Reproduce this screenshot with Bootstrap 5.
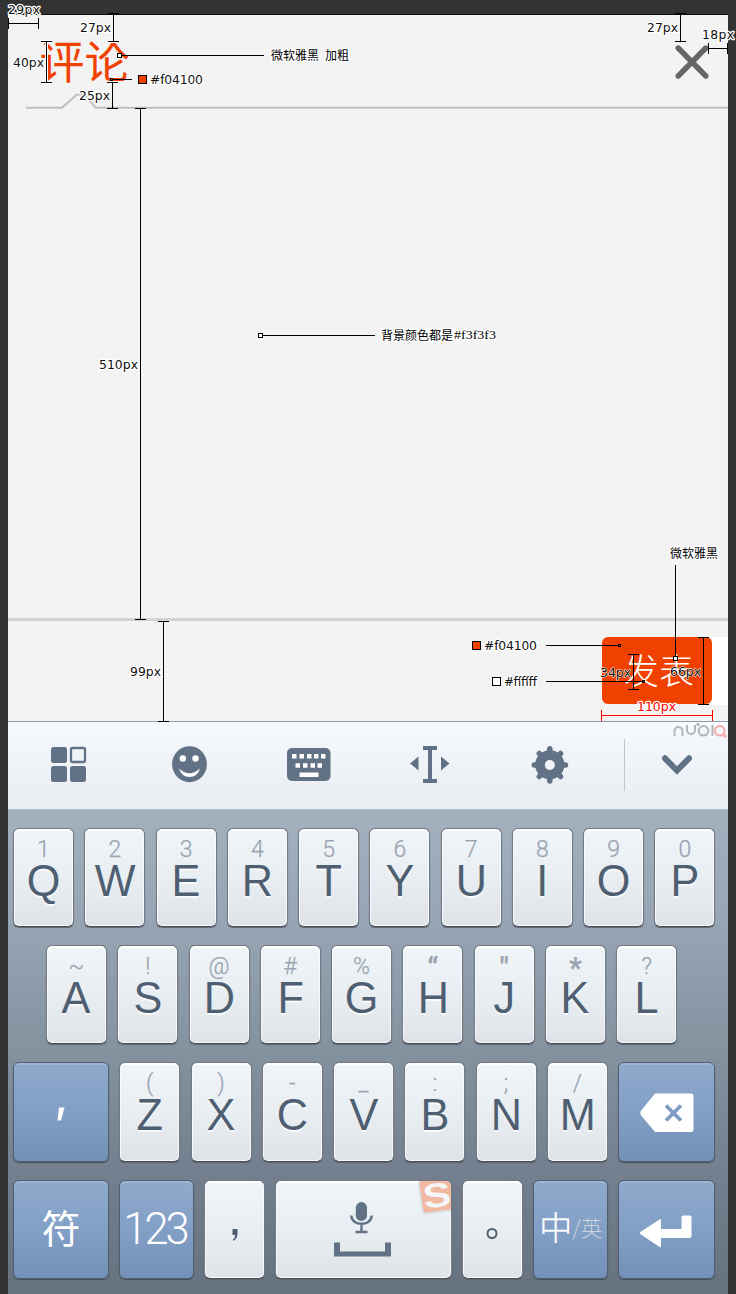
<!DOCTYPE html>
<html lang="zh-CN">
<head>
<meta charset="utf-8">
<meta name="viewport" content="width=device-width, initial-scale=1">
<title>评论</title>
<link href="https://cdn.jsdelivr.net/npm/bootstrap@5.3.0/dist/css/bootstrap.min.css" rel="stylesheet">
<style>
body{background:#333;font-family:"Liberation Sans","Noto Sans CJK SC",sans-serif;height:1294px;overflow:hidden}
.phone{width:720px;height:1280px;margin:14px 8px 0;background:#f3f3f3;border-top:1px solid #0c0c0c}
.top-area{height:91px;padding:0 19.5px 0 30px}
.title-text{color:#f04100;font:45px/66px "Noto Sans CJK SC",sans-serif;margin:12px 0 0 1.5px}
.close-btn{width:34px;height:36px;margin-top:29px;padding:0;border:0;background:none;line-height:0}
.tab-line{height:16px;margin-top:-13px;line-height:0}
.editor{height:509px}
.action-bar{height:103px;border-top:3px solid #d3d3d3;padding-top:16px}
.send-btn{width:110px;height:67px;border:0;border-radius:6px;background:#f04100;color:#fff;font:300 35px/60px "Noto Sans CJK SC",sans-serif;padding:0 0 3px 4px}
.send-pad{width:16px;height:68px;background:#fff}
.tool-bar{height:89px;border-top:1px solid #8e9fac;border-bottom:1px solid #b7c4d0;background:linear-gradient(#f6f9fd,#eef1f6 60%,#e9eef2)}
.tool-cell{width:120.5px}
.tool-last{width:104px;height:52px;border-left:1px solid #bcc7d2;margin-top:17px}
.keyboard{height:485px;background:linear-gradient(#a3b0be,#98a5b4 22%,#84919f 50%,#727e8d 77%,#67727f);padding:18px 12px 0 5px;gap:18px}
.key-row{gap:10.27px}
.key{position:relative;width:61px;height:99.2px;border:1px solid #737a83;border-bottom-color:#4a5058;border-radius:6px;background:linear-gradient(#f0f5fa,#e8edf1 55%,#dfe3e8);box-shadow:inset 0 2px 0 #fff,inset 1px 0 0 #f8fafc,inset -1px 0 0 #f8fafc,inset 0 -1px 0 #f8fafc,0 1px 1px #5a646f;color:#4f5f72;overflow:hidden;flex-shrink:0}
.key-blue{background:linear-gradient(#8eaacb,#829fc6 50%,#7390b6);border-color:#525f70;box-shadow:inset 0 2px 0 #9bb7d5,0 1px 1px #444e5b;color:#fff}
.hint{font:300 23px/27px Roboto,sans-serif;height:27px;margin-top:6.5px;color:#9aa3b0;-webkit-text-stroke:.25px #9aa3b0}
.hint-bold{font-weight:500;font-size:29px;line-height:31px}
.cap{font:45px/50px "Liberation Sans",sans-serif;margin-top:-7px;text-shadow:0 2px 0 #f8fafb}
.glyph{display:inline-block;transform:scaleX(.96)}
.k96{width:96px}.k97{width:97px}.k75{width:75px}.k177{width:177px}
.fu{font:39px/91px "Noto Sans CJK SC",sans-serif}
.num{font:300 43.5px/98px Roboto,sans-serif;letter-spacing:-3px;text-indent:-3px}
.zhong{font:300 33px/90px "Noto Sans CJK SC",sans-serif;-webkit-text-stroke:.3px #fff}
.ying{font:300 21.5px/92px "Noto Sans CJK SC",sans-serif;color:#cdd4dc}
.notes{position:absolute;left:0;top:0;pointer-events:none}
.notes text{font:12.4px "DejaVu Sans","Noto Sans CJK SC",sans-serif;fill:#111;stroke:#fff;stroke-width:2.5px;paint-order:stroke;stroke-linejoin:round}
.notes .cn{font-family:"Noto Sans CJK SC",sans-serif;font-size:12px;fill:#000}
.notes .halo{stroke:#fff;stroke-width:3;fill:none}
.notes .rule{stroke:#000;stroke-width:1;fill:none}
.ov{position:absolute}
</style>
</head>
<body>
<main class="phone d-flex flex-column">
  <header class="top-area d-flex justify-content-between align-items-start flex-shrink-0">
    <h1 class="title-text">评论</h1>
    <button class="close-btn" aria-label="关闭"><svg width="34" height="36" viewBox="0 0 34 36"><path d="M3.200 4 30.800 32M30.800 4 3.200 32" stroke="#666" stroke-width="5.400" stroke-linecap="round"/></svg></button>
  </header>
  <div class="tab-line flex-shrink-0"><svg width="720" height="16" viewBox="8 93 720 16"><path d="M26 107.700H62L77 94.500H84L96 107.700H728" fill="none" stroke="#bfbfbf" stroke-width="2"/></svg></div>
  <section class="editor flex-shrink-0"></section>
  <section class="action-bar d-flex justify-content-end align-items-start flex-shrink-0"><button class="send-btn">发表</button><div class="send-pad"></div></section>
  <nav class="tool-bar d-flex align-items-start flex-shrink-0">
    <div class="tool-cell d-flex justify-content-center"><svg width="120" height="87" viewBox="8 722 120 87" fill="#627286"><rect x="51" y="747" width="16" height="16" rx="2.500"/><rect x="51" y="766" width="16" height="16" rx="2.500"/><rect x="70" y="766" width="16" height="16" rx="2.500"/><rect x="71" y="748" width="14" height="14" rx="1.500" fill="none" stroke="#627286" stroke-width="2.300"/></svg></div>
    <div class="tool-cell d-flex justify-content-center"><svg width="120" height="87" viewBox="129 722 120 87"><ellipse cx="189.500" cy="764.200" rx="17.400" ry="18" fill="#627286"/><circle cx="182.800" cy="758.500" r="3.200" fill="#fff"/><circle cx="195.500" cy="758.500" r="3.200" fill="#fff"/><path d="M179 768.500Q189.500 778 200 768.500Q197.500 777 189.500 777Q181.500 777 179 768.500" fill="#fff"/></svg></div>
    <div class="tool-cell d-flex justify-content-center"><svg width="120" height="87" viewBox="249.500 722 120 87"><rect x="287.500" y="748" width="43.500" height="33" rx="5" fill="#627286"/><path d="M292.500 756.200h4.500M300 756.200h4.500M307.500 756.200h4.500M314.500 756.200h4.500M321.500 756.200h4.500M296 765.500h4.500M303.500 765.500h4.500M311 765.500h4.500M318 765.500h4.500M300 774.700h19" stroke="#fff" stroke-width="4.500"/></svg></div>
    <div class="tool-cell d-flex justify-content-center"><svg width="120" height="87" viewBox="370 722 120 87" fill="#627286"><path d="M423 746h14v4h-5v29h5v4h-14v-4h5v-29h-5zM418.500 756.500v14L410 763.500zM441 756.500v14l8.500-7z"/></svg></div>
    <div class="tool-cell d-flex justify-content-center"><svg width="120" height="87" viewBox="490.500 722 120 87"><g stroke="#627286" stroke-width="5.500" stroke-linecap="round"><path d="M550.300 748.700V781M534.800 765H566M539.800 753.500 561 776.500M561 753.500 539.800 776.500"/></g><circle cx="550.300" cy="764.800" r="14.600" fill="#627286"/><circle cx="550.300" cy="765" r="5" fill="#f1f4f8"/></svg></div>
    <div class="tool-last ms-auto position-relative d-flex"><svg width="102" height="52" viewBox="625 739 102 52"><path d="M665 758.300 677 770.500 689 758.300" fill="none" stroke="#627286" stroke-width="6" stroke-linecap="round"/></svg>
      <svg class="ov" style="left:46px;top:-16px" width="58" height="18" viewBox="671 723 58 18" fill="none" stroke="#b4b5b8" stroke-width="2"><path d="M674.500 736v-5a4 4 0 0 1 8 0v5M687 725v5a4 4 0 0 0 8 0v-5"/><circle cx="703.500" cy="730.800" r="4.800"/><circle cx="698" cy="724.500" r=".7"/><path d="M712.500 725v11"/><circle cx="719.800" cy="730.800" r="4.800" stroke="#f6a9aa"/><circle cx="725" cy="736" r=".8" stroke="#f6a9aa"/></svg>
    </div>
  </nav>
  <section class="keyboard d-flex flex-column flex-shrink-0">
    <div class="key-row d-flex" data-keys="1Q 2W 3E 4R 5T 6Y 7U 8I 9O 0P"></div>
    <div class="key-row d-flex" style="padding-left:33px" data-keys="~A !S @D #F %G “H &quot;J *K ?L"></div>
    <div class="key-row d-flex">
      <div class="key key-blue k96"><svg width="94" height="97" viewBox="14.500 1063.500 94 97"><path d="M59.500 1108h5.500l-3.500 13h-3.500z" fill="#fff"/></svg></div>
      <div class="d-flex key-row" data-keys="(Z )X -C _V :B ;N /M"></div>
      <div class="key key-blue k97"><svg width="95" height="97" viewBox="619 1064 95 97"><path d="M655 1094.500h36a2.500 2.500 0 0 1 2.500 2.500v33.500a2.500 2.500 0 0 1-2.500 2.500H655L640.800 1116q-1.300-2 0-4z" fill="#fff"/><path d="m666 1106.500 15 15m0-15-15 15" stroke="#7f9dc4" stroke-width="3.800"/></svg></div>
    </div>
    <div class="d-flex" style="gap:10.05px">
      <div class="key key-blue k96 text-center fu">符</div>
      <div class="key key-blue k75 text-center num">123</div>
      <div class="key"><svg width="59" height="97" viewBox="206 1181 59 97"><path d="M233.500 1229h5v5q0 5-4.500 7v-1.500q2.200-1.500 2.200-4.500h-2.700z" fill="#4f5f72"/></svg></div>
      <div class="key k177"><svg width="175" height="97" viewBox="277 1181 175 97"><rect x="356.800" y="1202" width="11.200" height="19" rx="5.600" fill="#627286"/><path d="M352.300 1215.500c0 11 20.400 11 20.400 0M362.500 1223v9M356.500 1232h12" fill="none" stroke="#627286" stroke-width="2.400"/><path d="M335 1242.500h6v9h45v-9h6v14h-57z" fill="#627286"/><g transform="rotate(-8 438 1196)"><rect x="420.500" y="1179" width="34" height="34" rx="4" fill="#dde1e4"/><rect x="422.500" y="1177" width="34" height="34" rx="3" fill="#f2b9a2"/><text x="424" y="1207" font-family="Liberation Sans,sans-serif" font-weight="700" font-size="34" textLength="28" lengthAdjust="spacingAndGlyphs" fill="#f4f6f8">S</text></g></svg></div>
      <div class="key"><svg width="59" height="97" viewBox="464 1181 59 97"><circle cx="493" cy="1233.500" r="4.500" fill="none" stroke="#4f5f72" stroke-width="2"/></svg></div>
      <div class="key key-blue k75 d-flex justify-content-center"><span class="zhong">中</span><span class="ying">/英</span></div>
      <div class="key key-blue k97"><svg width="95" height="97" viewBox="620 1181 95 97"><path d="M641.300 1232 660.500 1219.500q1.500-.6 1.500 1V1229h20.500v-11.500q0-2 2-2h6q2 0 2 2V1236q0 2-2 2H662v8q0 1.600-1.500 1L641.300 1234q-1-1 0-2z" fill="#fff"/></svg></div>
    </div>
  </section>
</main>

<svg class="notes" width="736" height="1294" viewBox="0 0 736 1294" shape-rendering="crispEdges">
  <defs><path id="rules" d="M8.500 18v11M38.500 18v11M8 23.500h31M108 13.500h11M108 41.500h11M113.500 14v27M675 13.500h11M675 41.500h11M680.500 14v27M708.500 43v11M727.500 43v11M708 48.500h20M41 41.500h11M41 82.500h11M46.500 42v40M107 82.500h11M107 108.500h11M112.500 82v26M135 108.500h11M135 619.500h11M140.500 109v510M158 621.500h11M158 721.500h11M163.500 622v99M120 55.500h144M113 79.500h19M261 335.500h114M546 645.500h73M546 681.500h97M675.500 565v92M628 654.500h11M628 689.500h11M633.500 655v34M698 637.500h11M698 704.500h11M703.500 638v66"/></defs>
  <path d="M41 41.500h11M46.500 42v40M41 82.500h11M108 41.500h11M107 82.500h11" class="halo"/>
  <use href="#rules" class="rule"/>
  <path d="M601.500 710v11M712.500 710v11M601 715.500h112" fill="none" stroke="#f00"/>
  <g fill="#fff" stroke="#000"><rect x="117.500" y="53.500" width="4" height="4"/><rect x="258.500" y="333.500" width="4" height="4"/><rect x="673.500" y="656.500" width="4" height="4"/><rect x="492.500" y="677.500" width="8" height="8"/></g>
  <g fill="#f04100" stroke="#000"><rect x="110.500" y="78.500" width="2" height="2"/><rect x="618.500" y="644.500" width="2" height="2"/><rect x="642.500" y="680.500" width="2" height="2"/><rect x="138.500" y="75.500" width="8" height="8"/><rect x="472.500" y="641.500" width="8" height="8"/></g>
  <text x="8" y="14" textLength="32">29px</text>
  <text x="80" y="32" textLength="31">27px</text>
  <text x="647" y="32" textLength="31">27px</text>
  <text x="702" y="39" textLength="32">18px</text>
  <text x="13" y="67" textLength="31">40px</text>
  <text x="79" y="100" textLength="31">25px</text>
  <text x="150" y="84" textLength="53">#f04100</text>
  <text x="99" y="369" textLength="39">510px</text>
  <text x="130" y="676" textLength="31">99px</text>
  <text x="484" y="650" textLength="53">#f04100</text>
  <text x="504" y="686" textLength="33">#ffffff</text>
  <text x="600" y="677" textLength="31" style="stroke-width:1px">34px</text>
  <text x="670" y="676" textLength="31" style="stroke-width:1px">66px</text>
  <text x="637" y="711" textLength="39" style="fill:#f00">110px</text>
  <text class="cn" x="271" y="60">微软雅黑</text><text class="cn" x="325" y="60">加粗</text>
  <text class="cn" x="381" y="340">背景颜色都是</text><text x="454" y="339" textLength="42" lengthAdjust="spacingAndGlyphs" style="font-family:'Liberation Serif',serif;fill:#000">#f3f3f3</text>
  <text class="cn" x="670" y="558">微软雅黑</text>
</svg>
<script>
document.querySelectorAll('[data-keys]').forEach(function (row) {
  row.dataset.keys.split(' ').forEach(function (pair) {
    var key = document.createElement('div');
    key.className = 'key text-center';
    var hint = document.createElement('div');
    hint.className = 'hint' + ('“"*'.includes(pair[0]) ? ' hint-bold' : '');
    hint.textContent = pair[0];
    var cap = document.createElement('div');
    cap.className = 'cap';
    var glyph = document.createElement('span');
    glyph.className = 'glyph';
    glyph.textContent = pair[1];
    cap.appendChild(glyph);
    key.append(hint, cap);
    row.appendChild(key);
  });
});
</script>
<script src="https://cdn.jsdelivr.net/npm/bootstrap@5.3.0/dist/js/bootstrap.bundle.min.js"></script>
</body>
</html>
